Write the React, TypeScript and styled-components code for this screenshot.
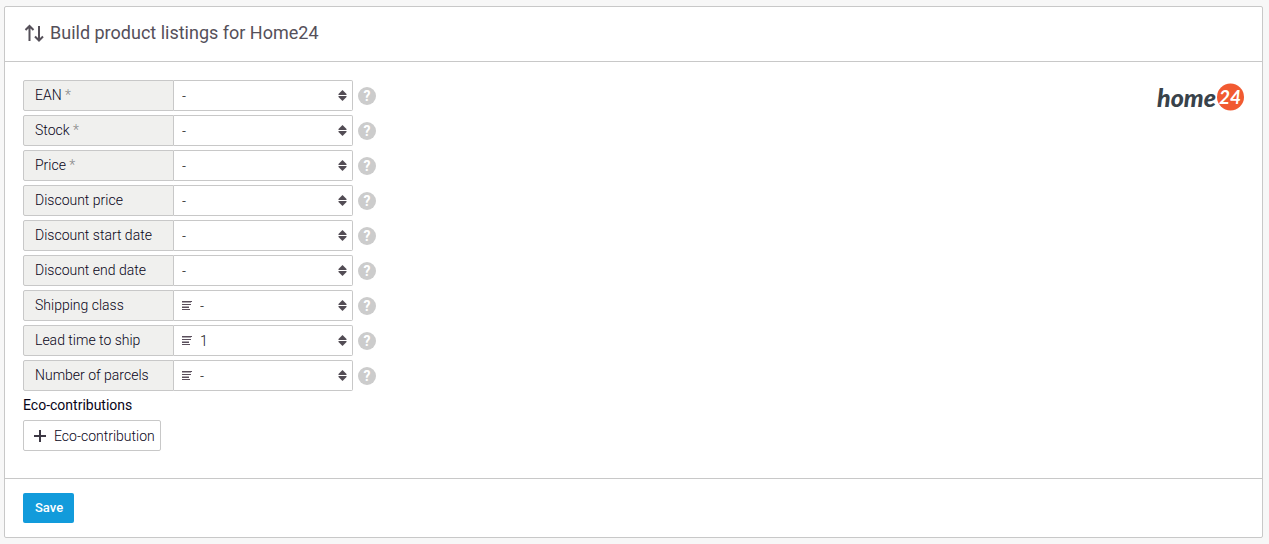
import React from "react";
import styled, { createGlobalStyle } from "styled-components";

const GlobalStyle = createGlobalStyle`
  *, *::before, *::after { box-sizing: border-box; }
  body {
    margin: 0;
    background: #f7f7f7;
    color: #080418;
    font: 300 14px/20px Roboto, "Liberation Sans", sans-serif;
  }
`;

const Page = styled.main`
  padding: 6px 6px 6px 4px;
`;

const Card = styled.form`
  background: #fff;
  border: 1px solid #c8c8c8;
  border-radius: 2px;
`;

const Header = styled.header`
  display: flex;
  align-items: center;
  gap: 5px;
  padding: 14px 18px 16px;
  border-bottom: 1px solid #c8c8c8;
`;

const Title = styled.h1`
  margin: 0;
  color: #55505a;
  font-size: 18px;
  font-weight: 400;
  line-height: 24px;
`;

const Body = styled.div`
  display: flex;
  justify-content: space-between;
  align-items: flex-start;
  padding: 18px 18px 27px;
`;

const Fields = styled.div`
  display: flex;
  flex-direction: column;
  gap: 4px;
`;

const Row = styled.div`
  display: flex;
  align-items: center;
  height: 31px;
`;

const Label = styled.label`
  width: 151px;
  height: 31px;
  padding: 0 11px;
  border: 1px solid #c8c8c8;
  border-radius: 2px 0 0 2px;
  background: #f0f0ee;
  line-height: 29px;
`;

const Required = styled.span`
  color: #888;
`;

const SelectBox = styled.div`
  position: relative;
  width: 179px;
  margin-right: 5px;
`;

const Select = styled.select<{ $withIcon: boolean }>`
  display: block;
  appearance: none;
  width: 100%;
  height: 31px;
  margin: 0;
  padding: 0 24px 0 ${(p) => (p.$withIcon ? 26 : 8)}px;
  border: 1px solid #c8c8c8;
  border-left: 0;
  border-radius: 0 2px 2px 0;
  background: #fff;
  color: #111;
  font: inherit;
`;

const LinesIcon = styled.svg`
  position: absolute;
  left: 8px;
  top: 10px;
  pointer-events: none;
`;

const SortIcon = styled.svg`
  position: absolute;
  right: 6px;
  top: 10px;
  pointer-events: none;
`;

const Help = styled.button`
  width: 18px;
  height: 18px;
  padding: 0;
  border: 0;
  border-radius: 50%;
  background: #ccc;
  color: #fff;
  font: 700 14px/18px Roboto, "Liberation Sans", sans-serif;
`;

const SectionTitle = styled.h2`
  margin: 0;
  font-size: 14px;
  font-weight: 400;
  line-height: 29px;
`;

const AddButton = styled.button`
  display: flex;
  align-items: center;
  gap: 8px;
  height: 31px;
  padding: 0 5px 0 10px;
  border: 1px solid #c8c8c8;
  border-radius: 2px;
  background: #fff;
  color: inherit;
  font: inherit;
`;

const Footer = styled.footer`
  padding: 14px 18px;
  border-top: 1px solid #c8c8c8;
`;

const SaveButton = styled.button`
  display: block;
  height: 30px;
  padding: 0 11px 0 12px;
  border: 0;
  border-radius: 2px;
  background: #129bdb;
  color: #fff;
  font: 500 13px/30px Roboto, "Liberation Sans", sans-serif;
`;

type Field = { id: string; label: string; required?: boolean; icon?: boolean; value: string };

const fields: Field[] = [
  { id: "ean", label: "EAN", required: true, value: "-" },
  { id: "stock", label: "Stock", required: true, value: "-" },
  { id: "price", label: "Price", required: true, value: "-" },
  { id: "discount-price", label: "Discount price", value: "-" },
  { id: "discount-start", label: "Discount start date", value: "-" },
  { id: "discount-end", label: "Discount end date", value: "-" },
  { id: "shipping-class", label: "Shipping class", icon: true, value: "-" },
  { id: "lead-time", label: "Lead time to ship", icon: true, value: "1" },
  { id: "parcels", label: "Number of parcels", icon: true, value: "-" },
];

function FieldRow({ id, label, required, icon, value }: Field) {
  return (
    <Row>
      <Label htmlFor={id}>
        {label}
        {required && <Required> *</Required>}
      </Label>
      <SelectBox>
        <Select id={id} $withIcon={!!icon} defaultValue={value}>
          <option value={value}>{value}</option>
        </Select>
        {icon && (
          <LinesIcon width="10" height="11" viewBox="0 0 10 11" fill="#5a4f5c" aria-hidden="true">
            <path d="M0 1h10v1H0zM0 4h9v1H0zM0 7h7v1H0zM0 9h8v1H0z" />
            <path d="M0 2h9v1H0zM0 6h7v1H0z" opacity=".5" />
          </LinesIcon>
        )}
        <SortIcon width="9" height="11" viewBox="0 0 9 11" fill="#524c54" aria-hidden="true">
          <path d="M4.5 0 8.500 4v1h-8V4zM.5 6h8v1l-4 4-4-4z" />
        </SortIcon>
      </SelectBox>
      <Help type="button" aria-label={`Help: ${label}`}>?</Help>
    </Row>
  );
}

function Logo() {
  return (
    <svg width="90" height="32" viewBox="0 0 90 32" role="img" aria-label="home24">
      <text
        x="3"
        y="27"
        fill="#38424a"
        fontFamily="Lato, sans-serif"
        fontSize="25"
        fontWeight="900"
        fontStyle="italic"
      >
        home
      </text>
      <circle cx="76.500" cy="17" r="13.500" fill="#f15a31" />
      <text
        x="76"
        y="24"
        fill="#fff"
        textAnchor="middle"
        fontFamily="Lato, sans-serif"
        fontSize="19"
        fontWeight="700"
        fontStyle="italic"
      >
        24
      </text>
    </svg>
  );
}

export default function App() {
  return (
    <>
      <GlobalStyle />
      <Page>
        <Card onSubmit={(e) => e.preventDefault()}>
          <Header>
            <svg width="22" height="18" viewBox="0 0 22 18" fill="none" stroke="#555059" strokeWidth="2" aria-hidden="true">
              <path d="M6.500 17V2.500M2.500 6l4-4 4 4M16 2v14M12 12.500l4 4 4-4" />
            </svg>
            <Title>Build product listings for Home24</Title>
          </Header>
          <Body>
            <div>
              <Fields>
                {fields.map((field) => (
                  <FieldRow key={field.id} {...field} />
                ))}
              </Fields>
              <SectionTitle>Eco-contributions</SectionTitle>
              <AddButton type="button">
                <svg width="12" height="12" viewBox="0 0 12 12" stroke="#3c3844" strokeWidth="2" aria-hidden="true">
                  <path d="M6 0v12M0 6h12" />
                </svg>
                Eco-contribution
              </AddButton>
            </div>
            <Logo />
          </Body>
          <Footer>
            <SaveButton type="submit">Save</SaveButton>
          </Footer>
        </Card>
      </Page>
    </>
  );
}
